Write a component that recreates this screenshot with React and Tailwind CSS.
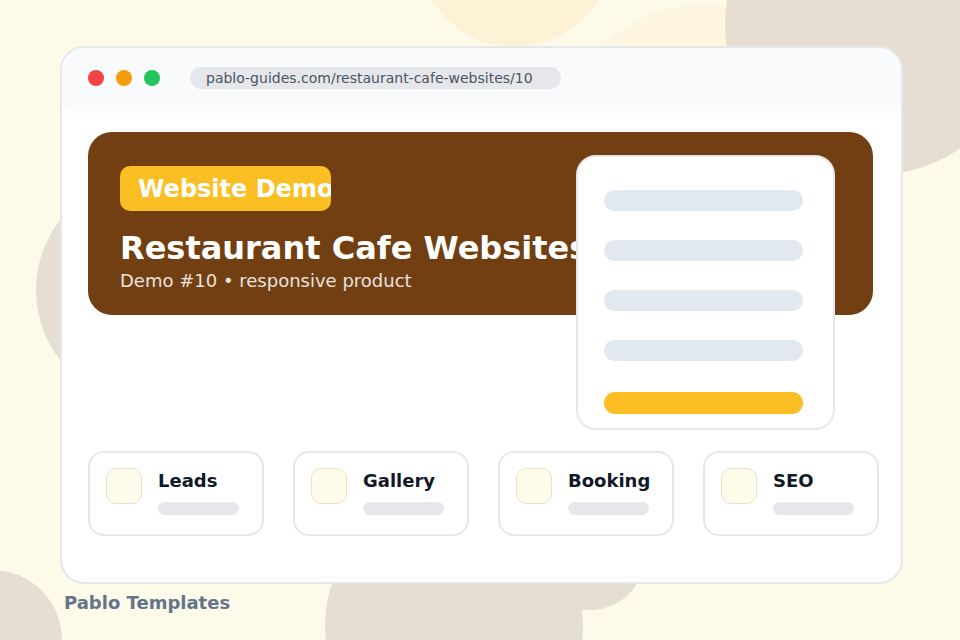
const features = ["Leads", "Gallery", "Booking", "SEO"];

export default function App() {
  return (
    <div className="relative h-[640px] w-[960px] overflow-hidden bg-[#fefae9] font-['DejaVu_Sans',sans-serif]">
      {/* background blobs */}
      <div className="absolute left-[418px] top-[-147px] h-[194px] w-[194px] rounded-full bg-[#fdf1d6]" />
      <div className="absolute left-[565px] top-[5px] h-[270px] w-[270px] rounded-full bg-[#fef5e0]" />
      <div className="absolute left-[725px] top-[-125px] h-[300px] w-[300px] rounded-full bg-[#e6ddd3]" />
      <div className="absolute left-[36px] top-[176px] h-[228px] w-[228px] rounded-full bg-[#e6ddd3]" />
      <div className="absolute left-[-78px] top-[570px] h-[140px] w-[140px] rounded-full bg-[#e6ddd3]" />
      <div className="absolute left-[325px] top-[496px] h-[258px] w-[258px] rounded-full bg-[#e6ddd3]" />
      <div className="absolute left-[535px] top-[500px] h-[110px] w-[110px] rounded-full bg-[#e6ddd3]" />

      <div className="relative pl-[60px] pt-[46px]">
        {/* browser window */}
        <div className="flex h-[538px] w-[843px] flex-col overflow-hidden rounded-[24px] border-2 border-[#e5e7eb] bg-white">
          <div className="flex h-[60px] shrink-0 items-center bg-[#f8fafc] pl-[26px] shadow-[0_4px_8px_rgba(248,250,252,0.9)]">
            <div className="flex gap-[12px]">
              <span className="h-[16px] w-[16px] rounded-full bg-[#ef4444]" />
              <span className="h-[16px] w-[16px] rounded-full bg-[#f59e0b]" />
              <span className="h-[16px] w-[16px] rounded-full bg-[#22c55e]" />
            </div>
            <div className="ml-[30px] flex h-[22px] items-center rounded-full bg-[#e5e7eb] pl-[16px] pr-[28px] text-[14px] leading-none text-[#4b5563]">
              pablo-guides.com/restaurant-cafe-websites/10
            </div>
          </div>

          <div className="relative flex-1 px-[26px] pt-[24px]">
            {/* hero */}
            <div className="h-[183px] w-[785px] rounded-[24px] bg-[#713f12] pl-[32px] pt-[34px]">
              <div className="flex h-[45px] w-[211px] items-center overflow-hidden whitespace-nowrap rounded-[10px] bg-[#fbbf24] pl-[18px] text-[24px] font-bold leading-none text-white">
                Website Demo
              </div>
              <h1 className="mt-[21px] whitespace-nowrap text-[32px] font-bold leading-none text-white">
                Restaurant Cafe Websites
              </h1>
              <p className="mt-[8px] text-[18px] leading-none text-white/85">
                Demo #10 • responsive product
              </p>
            </div>

            {/* feature cards */}
            <div className="mt-[136px] flex gap-[29px]">
              {features.map((f) => (
                <div
                  key={f}
                  className="flex h-[85px] w-[176px] shrink-0 gap-[16px] rounded-[16px] border-2 border-[#e5e7eb] bg-white pl-[16px] pt-[15px]"
                >
                  <div className="h-[36px] w-[36px] rounded-[10px] border border-[#e7e2cc] bg-[#fefbea]" />
                  <div className="pt-[4px]">
                    <div className="text-[18px] font-bold leading-none text-[#111827]">{f}</div>
                    <div className="mt-[12px] h-[13px] w-[81px] rounded-full bg-[#e5e7eb]" />
                  </div>
                </div>
              ))}
            </div>

            {/* floating form card */}
            <div className="absolute left-[514px] top-[47px] flex h-[275px] w-[259px] flex-col rounded-[20px] border-2 border-[#e5e7eb] bg-white px-[26px] pt-[33px]">
              <div className="flex flex-col gap-[29px]">
                <div className="h-[21px] w-[199px] rounded-full bg-[#e2e8f0]" />
                <div className="h-[21px] w-[199px] rounded-full bg-[#e2e8f0]" />
                <div className="h-[21px] w-[199px] rounded-full bg-[#e2e8f0]" />
                <div className="h-[21px] w-[199px] rounded-full bg-[#e2e8f0]" />
              </div>
              <div className="mt-[31px] h-[22px] w-[199px] rounded-full bg-[#fbbf24]" />
            </div>
          </div>
        </div>

        <div className="mt-[10px] pl-[4px] text-[18px] font-bold leading-none text-[#64748b]">
          Pablo Templates
        </div>
      </div>
    </div>
  );
}
